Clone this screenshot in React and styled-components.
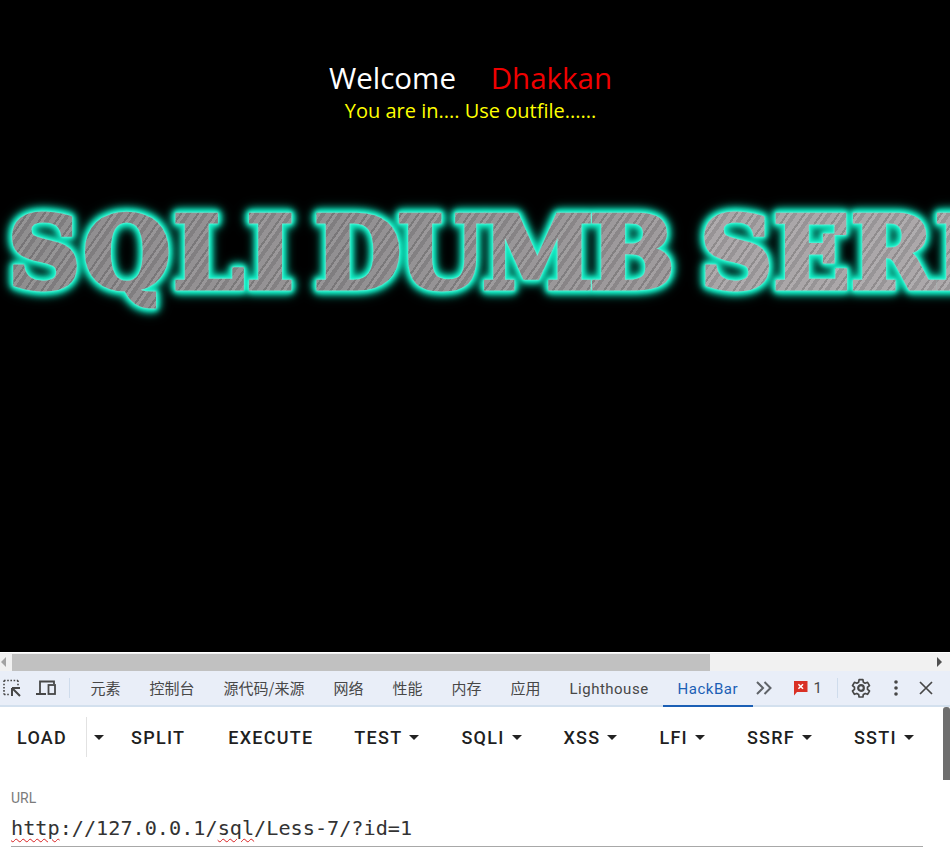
import React from 'react';
import styled, { createGlobalStyle } from 'styled-components';

const GlobalStyle = createGlobalStyle`
  html, body {
    margin: 0;
    padding: 0;
    background: #fff;
  }
  body {
    width: 950px;
    height: 865px;
    overflow: hidden;
    font-family: Roboto, "Noto Sans CJK SC", sans-serif;
  }
`;

const Viewport = styled.div`
  height: 652px;
  background: #000;
  overflow: hidden;
  display: flex;
  flex-direction: column;
`;

const Greeting = styled.div`
  padding: 59px 0 0 0;
  width: 941px;
  text-align: center;
  font-family: "Open Sans", sans-serif;
`;

const WelcomeLine = styled.div`
  font-size: 29.5px;
  line-height: 38px;
  color: #fff;
  white-space: pre;
`;

const Name = styled.span`
  color: #f00000;
  margin-left: 4px;
`;

const StatusLine = styled.div`
  font-size: 20px;
  line-height: 27px;
  color: #ffff00;
`;

const Banner = styled.div`
  margin-top: 70px;
  padding-left: 8px;
  width: 1400px;
  height: 130px;
  font-family: "DejaVu Serif", serif;
  font-weight: 700;
  font-size: 100px;
  line-height: 118px;
  white-space: pre;
  filter: drop-shadow(0 0 1px #a0faea) drop-shadow(0 0 2px #14f0c8) drop-shadow(0 0 2px #14f0c8) drop-shadow(0 0 3px #10e0b8) drop-shadow(0 0 4px #0aa88c);
`;

const BannerWord = styled.span`
  background:
    repeating-linear-gradient(125deg, rgba(255, 255, 255, .1) 0 3px, rgba(0, 0, 0, .09) 3px 7px, rgba(255, 255, 255, .05) 7px 12px, rgba(0, 0, 0, .14) 12px 14px),
    linear-gradient(90deg, ${p => p.$from}, ${p => p.$to});
  -webkit-background-clip: text;
  background-clip: text;
  color: transparent;
  -webkit-text-fill-color: transparent;
  -webkit-text-stroke: 5px transparent;
  letter-spacing: ${p => p.$ls}px;
  margin-right: ${p => p.$mr || 0}px;
`;

const HScrollbar = styled.div`
  height: 18px;
  margin-top: 1px;
  background: #f1f1f1;
  display: flex;
  align-items: center;
  justify-content: space-between;
  position: relative;
`;

const ScrollThumb = styled.div`
  position: absolute;
  left: 12px;
  top: 1px;
  width: 698px;
  height: 17px;
  background: #c1c1c1;
`;

const Arrow = styled.span`
  width: 0;
  height: 0;
  margin: 0 ${p => (p.$right ? '8px' : '0')} 0 ${p => (p.$right ? '0' : '1px')};
  border-top: 5px solid transparent;
  border-bottom: 5px solid transparent;
  ${p => (p.$right ? 'border-left: 5px solid #505050;' : 'border-right: 5px solid #a3a3a3;')}
`;

const Toolbar = styled.div`
  height: 34px;
  background: #e9eef8;
  border-bottom: 2px solid #d3e0ee;
  display: flex;
  align-items: center;
  box-sizing: content-box;
  color: #474747;
`;

const IconSlot = styled.div`
  width: ${p => p.$w || 35}px;
  height: 34px;
  display: flex;
  align-items: center;
  justify-content: center;
  flex: none;
`;

const Divider = styled.div`
  width: 1px;
  height: 20px;
  background: #cfdcec;
  flex: none;
  margin: ${p => p.$m || '0'};
`;

const Tab = styled.div`
  height: 34px;
  padding: 0 14.5px 2px;
  box-sizing: content-box;
  display: flex;
  align-items: center;
  font-size: 15px;
  line-height: 20px;
  font-family: "Noto Sans CJK SC", sans-serif;
  white-space: nowrap;
  color: ${p => (p.$active ? '#1b5fb5' : '#474747')};
  box-shadow: ${p => (p.$active ? 'inset 0 -2px 0 #1b5fb5' : 'none')};
  margin-bottom: -2px;
  margin-left: ${p => p.$ml || 0}px;
`;

const LatinTab = styled(Tab)`
  font-family: Roboto, sans-serif;
  letter-spacing: .5px;
  padding-top: 1px;
  height: 33px;
`;

const ErrorBadge = styled.div`
  display: flex;
  align-items: center;
  gap: 6px;
  margin-left: 18px;
  font-size: 15px;
  color: #474747;
  width: 38px;
  flex: none;
`;

const HackBar = styled.div`
  position: relative;
  height: 158px;
  background: #fff;
`;

const VScrollThumb = styled.div`
  position: absolute;
  right: 0;
  top: 0;
  width: 7px;
  height: 73px;
  background: #6f6f6f;
  border-radius: 3px 3px 0 0;
`;

const ButtonRow = styled.div`
  height: 60px;
  display: flex;
  align-items: center;
`;

const ToolButton = styled.div`
  display: flex;
  align-items: center;
  flex: none;
  height: 40px;
  margin-left: ${p => p.$ml}px;
  font-size: 18px;
  font-weight: 500;
  letter-spacing: 1.25px;
  color: #1f1f1f;
  white-space: nowrap;
`;

const Caret = styled.span`
  width: 0;
  height: 0;
  margin-left: ${p => p.$ml ?? 7}px;
  border-left: 5px solid transparent;
  border-right: 5px solid transparent;
  border-top: 5px solid #222;
`;

const SplitDivider = styled.div`
  width: 1px;
  height: 40px;
  background: #e2e2e2;
  flex: none;
  margin-left: 19px;
`;

const UrlField = styled.div`
  padding: 23px 27px 0 11px;
`;

const UrlLabel = styled.div`
  font-size: 14px;
  line-height: 16px;
  color: #7b7b7b;
`;

const UrlInput = styled.div`
  margin-top: 5px;
  height: 35px;
  line-height: 34px;
  border-bottom: 1px solid #a8a8a8;
  font-family: "DejaVu Sans Mono", monospace;
  font-size: 20.2px;
  color: #333;
  white-space: pre;
`;

const Misspelled = styled.span`
  text-decoration: underline wavy #d92020 1.2px;
  text-underline-offset: 3px;
`;

const InspectIcon = () => (
  <svg width="20" height="20" viewBox="0 0 20 20" fill="none" stroke="#474747">
    <path d="M2 2.5h14M2 2.5v14M16 2.5v5M2 16.5h5" strokeWidth="1.6" strokeDasharray="1.6 1.6" />
    <path d="M10 10h8M10 10v8M10.5 10.5l7.5 7.5" strokeWidth="2" />
  </svg>
);

const DeviceIcon = () => (
  <svg width="22" height="20" viewBox="0 0 22 20" fill="none" stroke="#474747" strokeWidth="1.8">
    <path d="M5 15V3.5h14V6" />
    <path d="M1 16h10" strokeWidth="2" />
    <rect x="13.5" y="7" width="6.5" height="9" />
  </svg>
);

const ChevronsIcon = () => (
  <svg width="18" height="14" viewBox="0 0 18 14" fill="none" stroke="#5f6368" strokeWidth="2">
    <path d="M2 1l6 6-6 6M9.5 1l6 6-6 6" />
  </svg>
);

const ErrorIcon = () => (
  <svg width="15" height="16" viewBox="0 0 15 16">
    <path d="M1 1h13.5v11H4l-3 3.5z" fill="#d93025" />
    <path d="M5.4 4.2l4.6 4.6M10 4.2l-4.6 4.6" stroke="#fff" strokeWidth="1.5" />
  </svg>
);

const GearIcon = () => (
  <svg width="20" height="20" viewBox="0 0 24 24" fill="none" stroke="#474747" strokeWidth="2" strokeLinejoin="round">
    <path d="M9.7 2h4.6l.5 3 2.2 1.3 2.9-1.1 2.3 4-2.4 1.9v2.6l2.4 1.9-2.3 4-2.9-1.1-2.2 1.3-.5 3H9.7l-.5-3L7 18.5l-2.9 1.1-2.3-4 2.4-1.9v-2.6L1.8 9.2l2.3-4L7 6.3 9.2 5z" />
    <circle cx="12" cy="12" r="3.4" strokeWidth="2.6" />
  </svg>
);

const DotsIcon = () => (
  <svg width="6" height="16" viewBox="0 0 6 16" fill="#474747">
    <circle cx="3" cy="2" r="1.8" />
    <circle cx="3" cy="8" r="1.8" />
    <circle cx="3" cy="14" r="1.8" />
  </svg>
);

const CloseIcon = () => (
  <svg width="14" height="14" viewBox="0 0 14 14" stroke="#474747" strokeWidth="1.7">
    <path d="M1 1l12 12M13 1L1 13" />
  </svg>
);

const tabs = ['元素', '控制台', '源代码/来源', '网络', '性能', '内存', '应用'];

const buttons = [
  { label: 'SPLIT', ml: 27 },
  { label: 'EXECUTE', ml: 43 },
  { label: 'TEST', ml: 41, caret: true },
  { label: 'SQLI', ml: 42, caret: true },
  { label: 'XSS', ml: 42, caret: true },
  { label: 'LFI', ml: 42, caret: true },
  { label: 'SSRF', ml: 42, caret: true },
  { label: 'SSTI', ml: 42, caret: true },
];

export default function App() {
  return (
    <>
      <GlobalStyle />
      <Viewport>
        <Greeting>
          <WelcomeLine>Welcome{'    '}<Name>Dhakkan</Name></WelcomeLine>
          <StatusLine>You are in.... Use outfile......</StatusLine>
        </Greeting>
        <Banner>
          <BannerWord $ls={3} $mr={-20} $from="#8a888a" $to="#928f91">SQLI </BannerWord>
          <BannerWord $ls={-3} $mr={-3} $from="#8c8a8c" $to="#9c989a">DUMB </BannerWord>
          <BannerWord $ls={1} $from="#a6a2a4" $to="#aaa6a8">SERIES</BannerWord>
        </Banner>
      </Viewport>

      <HScrollbar>
        <Arrow />
        <ScrollThumb />
        <Arrow $right />
      </HScrollbar>

      <Toolbar>
        <IconSlot $w={23}><InspectIcon /></IconSlot>
        <IconSlot $w={46}><DeviceIcon /></IconSlot>
        <Divider />
        {tabs.map((t, i) => <Tab key={t} $ml={i === 0 ? 6 : 0}>{t}</Tab>)}
        <LatinTab>Lighthouse</LatinTab>
        <LatinTab $active>HackBar</LatinTab>
        <IconSlot $w={22}><ChevronsIcon /></IconSlot>
        <ErrorBadge><ErrorIcon />1</ErrorBadge>
        <Divider $m="0 0 0 6px" />
        <IconSlot $w={46}><GearIcon /></IconSlot>
        <IconSlot $w={24}><DotsIcon /></IconSlot>
        <IconSlot $w={36}><CloseIcon /></IconSlot>
      </Toolbar>

      <HackBar>
        <VScrollThumb />
        <ButtonRow>
          <ToolButton $ml={17}>LOAD</ToolButton>
          <SplitDivider />
          <Caret $ml={7} />
          {buttons.map(b => (
            <ToolButton key={b.label} $ml={b.ml}>
              {b.label}
              {b.caret && <Caret />}
            </ToolButton>
          ))}
        </ButtonRow>
        <UrlField>
          <UrlLabel>URL</UrlLabel>
          <UrlInput><Misspelled>http</Misspelled>://127.0.0.1/<Misspelled>sql</Misspelled>/Less-7/?id=1</UrlInput>
        </UrlField>
      </HackBar>
    </>
  );
}
